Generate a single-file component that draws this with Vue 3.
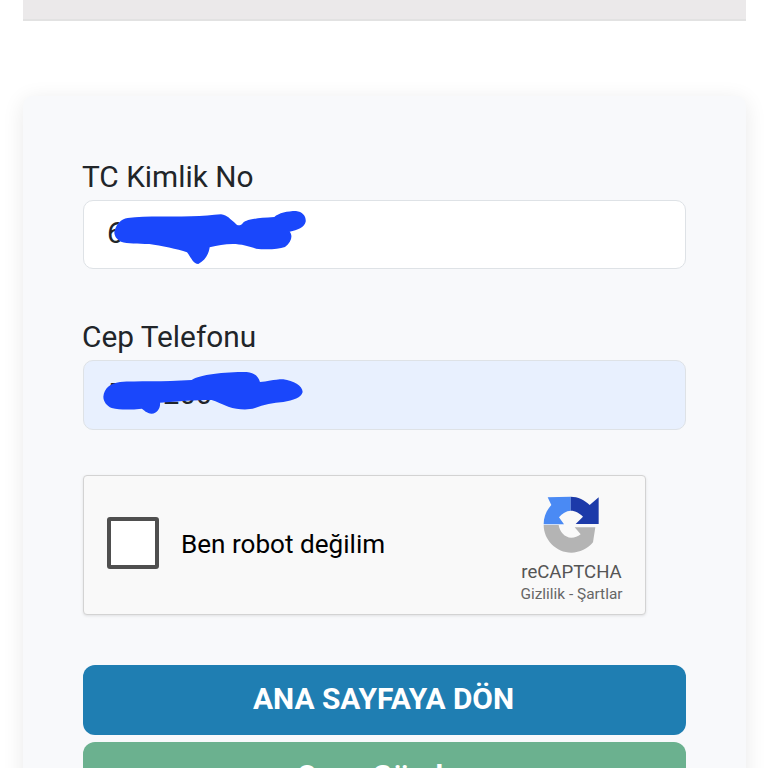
<script setup>
</script>

<template>
  <div class="page">
    <div class="topbar"></div>
    <div class="card">
      <div class="field">
        <label class="label">TC Kimlik No</label>
        <div class="input">
          <span>60000000</span>
          <svg class="scribble" viewBox="0 0 780 240" width="260" height="80">
            <path d="M100 130 C105 105 120 90 140 87 C190 80 260 84 330 82 C365 81 395 78 420 76 C440 78 448 92 462 102 C468 110 476 112 484 104 C492 94 510 88 580 84 C592 72 620 66 645 66 C665 68 676 82 674 98 C670 115 650 122 626 128 C636 140 632 158 612 174 C590 182 550 182 525 179 C505 172 480 165 455 165 C430 165 410 170 386 175 C384 190 376 212 352 225 C336 224 330 205 318 190 C290 180 240 170 205 165 C170 164 140 164 120 158 C108 152 100 142 100 130 Z" fill="#1a47fb"/>
          </svg>
        </div>
      </div>
      <div class="field second">
        <label class="label">Cep Telefonu</label>
        <div class="input filled">
          <span>555 200</span>
          <svg class="scribble two" viewBox="0 500 780 200" width="260" height="66.67">
            <path d="M70 622 C72 598 90 582 120 578 C170 574 250 578 335 572 C360 556 430 548 500 548 C525 550 535 562 540 578 C560 578 580 570 610 570 C640 574 668 590 668 608 C664 626 640 632 610 638 C580 640 550 646 525 656 C500 664 470 660 445 652 C425 645 410 636 395 632 C350 632 290 636 240 640 C242 655 232 672 215 673 C200 672 192 662 185 658 C150 662 120 662 95 656 C80 650 70 636 70 622 Z" fill="#1a47fb"/>
          </svg>
        </div>
      </div>
      <div class="captcha">
        <div class="check"></div>
        <div class="robot">Ben robot değilim</div>
        <div class="brand">
          <svg class="logo" viewBox="0 0 204 204" width="68" height="68">
            <path d="M17 103 C17 80 26 60 40 45 L29 22 L98 20 L98 62 C85 63 72 70 63 82 L78 103 Z" fill="#4a8af4"/>
            <path d="M98 20 C120 20 140 30 155 45 L182 22 L182 102 L113 102 L135 80 C126 70 112 62 98 62 Z" fill="#1c3aa9"/>
            <path d="M17 105 L62 105 C65 125 80 143 100 143 C110 143 120 140 128 133 L110 112 L172 112 L165 157 C150 176 125 188 100 188 C55 188 17 150 17 105 Z" fill="#b4b4b4"/>
          </svg>
          <div class="brandname">reCAPTCHA</div>
          <div class="terms">Gizlilik - Şartlar</div>
        </div>
      </div>
      <button class="btn primary" type="button">ANA SAYFAYA DÖN</button>
      <button class="btn success" type="button">Onay Gönder</button>
    </div>
  </div>
</template>

<style scoped>
.page {
  width: 768px;
  height: 768px;
  overflow: hidden;
  background: #fff;
  padding: 0 22px 0 23px;
  box-sizing: border-box;
  font-family: Roboto, sans-serif;
}
.topbar {
  height: 21px;
  background: #ebe9ea;
  border-bottom: 2px solid #e2e2e2;
  box-sizing: border-box;
}
.card {
  margin-top: 75px;
  padding: 60px 60px 40px;
  background: #f8f9fb;
  border-radius: 10px;
  box-shadow: 0 4px 22px rgba(0, 0, 0, 0.09);
}
.field.second { margin-top: 47px; }
.label {
  display: block;
  font-size: 29.8px;
  line-height: 42px;
  margin-bottom: 2px;
  margin-left: -1px;
  color: #212529;
}
.input {
  position: relative;
  height: 69px;
  box-sizing: border-box;
  padding-left: 23px;
  padding-bottom: 3px;
  display: flex;
  align-items: center;
  background: #fff;
  border: 1.5px solid #dee2e6;
  border-radius: 10px;
  font-size: 29px;
  color: #212529;
}
.input.filled { background: #e8f0fe; height: 70px; }
.scribble { position: absolute; left: -3.5px; top: -12.5px; }
.scribble.two { left: -4.5px; top: -4.8px; }
.captcha {
  margin-top: 45px;
  width: 563px;
  height: 140px;
  box-sizing: border-box;
  display: flex;
  align-items: center;
  padding-left: 23px;
  padding-bottom: 4px;
  background: #f9f9f9;
  border: 1.5px solid #d3d3d3;
  border-radius: 4px;
  box-shadow: 0 1px 3px rgba(0, 0, 0, 0.1);
}
.check {
  width: 52px;
  height: 52px;
  box-sizing: border-box;
  background: #fff;
  border: 4px solid #4f4f4f;
  border-radius: 3px;
}
.robot {
  margin-left: 22px;
  margin-top: 2px;
  font-size: 26.1px;
  color: #000;
}
.brand {
  align-self: flex-start;
  margin-top: 13.5px;
  margin-left: auto;
  margin-right: 21.5px;
  width: 104px;
  display: flex;
  flex-direction: column;
  align-items: center;
  color: #555;
}
.logo { flex: none; }
.brandname { font-size: 18.6px; line-height: 24px; margin-top: 2px; }
.terms { font-size: 15.4px; line-height: 20px; white-space: nowrap; color: #666; }
.btn {
  display: block;
  width: 100%;
  height: 70px;
  padding: 0 2px 3px 0;
  border: 0;
  border-radius: 12px;
  color: #fff;
  font-family: Roboto, sans-serif;
  font-weight: 700;
  font-size: 29.9px;
}
.primary { margin-top: 50px; background: #1f7eb2; }
.success { margin-top: 7px; background: #6bb18f; }
</style>

<style>
html, body { margin: 0; overflow: hidden; }
</style>
